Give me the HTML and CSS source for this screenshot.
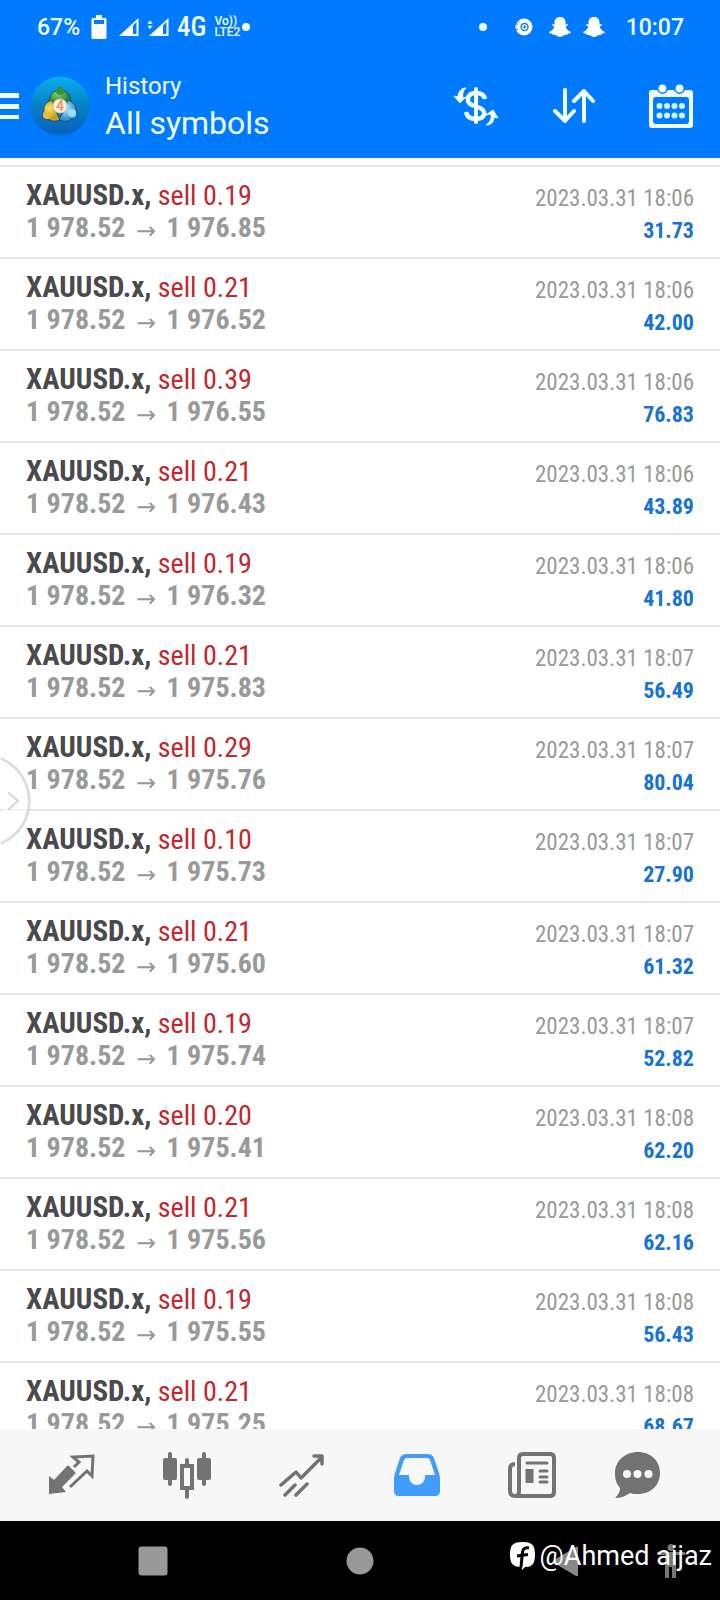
FILE: index.html
```html
<!DOCTYPE html>
<html lang="en">
<head>
<meta charset="utf-8">
<meta name="viewport" content="width=device-width, initial-scale=1">
<title>History</title>
<link rel="stylesheet" href="styles.css">
</head>
<body>
<div class="app">
  <header class="header">
    <div class="status">
      <div class="status-left">
        <span class="battery-text">67%</span>
        <svg width="16" height="24" viewBox="0 0 16 24" fill="#fff"><path d="M5 0h6v3h3q1.500 0 1.500 1.500v18q0 1.500-1.500 1.500H2q-1.500 0-1.500-1.500v-18Q.5 3 2 3h3z"/><path fill="#007aff" d="M3 5h10v4H3z"/></svg>
        <svg class="signal" width="20" height="18" viewBox="0 0 20 18"><path fill="#fff" d="M19.500 0v18H0z"/><path fill="#007aff" d="M14 7.500l3.500-3.500v12H14z"/></svg>
        <svg width="22" height="18" viewBox="0 0 22 18"><path fill="#fff" d="M21.500 0v18H2z"/><path fill="#007aff" d="M16 7.500l3.500-3.500v12H16z"/><path fill="#fff" stroke="#007aff" stroke-width=".5" d="M0 6l3-4 3 4zM0 7.500h6l-3 4z"/></svg>
        <span class="network">4G</span>
        <span class="volte"><span>Vo))</span><span>LTE2</span></span>
        <i class="dot"></i>
      </div>
      <div class="status-right">
        <i class="dot"></i>
        <svg class="play" width="18" height="18" viewBox="0 0 18 18"><circle cx="9" cy="9" r="8.500" fill="#fff"/><circle cx="9.500" cy="9" r="3.500" fill="none" stroke="#007aff" stroke-width="1.300"/><path fill="#007aff" d="M8.500 7l3 2-3 2z"/><path d="M1 5.500l2 1M1 12l2-1M3 3l1.500 1.500" stroke="#007aff"/></svg>
        <svg width="22" height="20" viewBox="0 0 22 20"><path fill="#fff" d="M11 0c4 0 5.500 2.500 5.500 5.500v2l2-.5c1 .8 0 1.800-1.800 2.600.6 2.600 2.300 4.200 5.300 5.400-.2 1.200-1.500 1.500-3.300 1.700-.4 1.200-.8 1.500-3 1.300-1.600.5-2.500 2-4.700 2s-3.100-1.500-4.700-2c-2.200.2-2.600-.1-3-1.300C1.500 16.500.2 16.200 0 15c3-1.200 4.700-2.800 5.300-5.400C3.500 8.800 2.500 7.800 3.500 7l2 .5v-2C5.500 2.500 7 0 11 0z"/></svg>
        <svg width="22" height="20" viewBox="0 0 22 20"><path fill="#fff" d="M11 0c4 0 5.500 2.500 5.500 5.500v2l2-.5c1 .8 0 1.800-1.800 2.600.6 2.600 2.300 4.200 5.300 5.400-.2 1.200-1.500 1.500-3.300 1.700-.4 1.200-.8 1.500-3 1.300-1.600.5-2.500 2-4.700 2s-3.100-1.500-4.700-2c-2.200.2-2.600-.1-3-1.300C1.500 16.500.2 16.200 0 15c3-1.200 4.700-2.800 5.300-5.400C3.500 8.800 2.500 7.800 3.500 7l2 .5v-2C5.500 2.500 7 0 11 0z"/></svg>
        <time class="clock">10:07</time>
      </div>
    </div>
    <div class="bar">
      <button class="icon-btn" aria-label="Menu"><svg width="20" height="28" viewBox="0 0 20 28" fill="#f0ffff"><path d="M0 1h19v5H0zM0 12h19v5H0zM0 23h19v4H0z"/></svg></button>
      <svg class="logo" width="60" height="60" viewBox="0 0 60 60">
        <defs>
          <linearGradient id="disc" x1="0" y1="0" x2="0" y2="1"><stop offset="0" stop-color="#08aff0"/><stop offset=".5" stop-color="#087fc4"/><stop offset="1" stop-color="#0560bd"/></linearGradient>
          <radialGradient id="green" cx=".4" cy=".3"><stop offset="0" stop-color="#8fd070"/><stop offset="1" stop-color="#27883d"/></radialGradient>
          <radialGradient id="gold" cx=".4" cy=".4"><stop offset="0" stop-color="#ffe665"/><stop offset="1" stop-color="#c79c20"/></radialGradient>
          <radialGradient id="blue" cx=".4" cy=".4"><stop offset="0" stop-color="#b5eaff"/><stop offset="1" stop-color="#3c91cf"/></radialGradient>
        </defs>
        <circle cx="30" cy="30" r="29.500" fill="url(#disc)"/>
        <g stroke="#123f55" stroke-opacity=".7">
          <path fill="url(#green)" d="M19 27c0-7 3-11 7-12 1-4 7-4 8 0 4 1 7 5 7 12l-11 4z"/>
          <path fill="url(#gold)" d="M22 24l4 11 4 9c-5 2-9 1-12-1-5 1-7-4-4-8-1-6 3-9 8-11z"/>
          <path fill="url(#blue)" d="M38 24c5 2 9 6 8 12 3 4 0 8-5 7-3 3-8 3-12 0l5-8z"/>
        </g>
        <circle cx="30" cy="15" r="4" fill="#2f9440"/><circle cx="17" cy="39" r="4" fill="#e8be37"/><circle cx="42" cy="37" r="4" fill="#9be0fb"/>
        <circle cx="30" cy="30" r="7" fill="#f7f1ea" stroke="#c9d0a8"/>
        <text class="logo-digit" x="30" y="35" text-anchor="middle">4</text>
      </svg>
      <div class="titles">
        <span class="subtitle">History</span>
        <h1 class="title">All symbols</h1>
      </div>
      <div class="actions">
        <button class="icon-btn" aria-label="Symbols"><svg width="46" height="44" viewBox="0 0 46 44" fill="none" stroke="#f0ffff"><path stroke-width="4" stroke-linecap="round" d="M23 5v33"/><path stroke-width="4.500" d="M32 15c-1-5-5-6-9-6-10 0-10 10-4 12l8 3c7 3 5 11-4 11-5 0-9-2-10-7"/><path fill="#f0ffff" d="M13 4c-3 3-4 6-3 10l3-1-6 6-6-7 4 1C5 8 8 4 13 4zM33 41c4-3 6-6 5-11l-5 1 7-5 5 8-4-1c0 5-3 8-8 8z"/></svg></button>
        <button class="icon-btn" aria-label="Sort"><svg width="42" height="36" viewBox="0 0 42 36" fill="none" stroke="#f0ffff" stroke-width="4" stroke-linecap="round" stroke-linejoin="round"><path d="M12 2v31M2 23l10 10 9-10M31 33V3M21 13L31 3l9 10"/></svg></button>
        <button class="icon-btn" aria-label="Calendar"><svg width="44" height="46" viewBox="0 0 44 46"><rect y="7" width="44" height="38" rx="3" fill="#f0ffff"/><rect x="4" y="14" width="36" height="27" rx="3" fill="#007aff"/><g fill="#f0ffff" stroke="#007aff" stroke-width="1.500"><circle cx="13.500" cy="5.500" r="4.700"/><circle cx="30.500" cy="5.500" r="4.700"/></g><g fill="#d3f5ff"><circle cx="10.500" cy="23" r="3"/><circle cx="18" cy="23" r="3"/><circle cx="25.500" cy="23" r="3"/><circle cx="33" cy="23" r="3"/><circle cx="10.500" cy="32.500" r="3"/><circle cx="18" cy="32.500" r="3"/><circle cx="25.500" cy="32.500" r="3"/><circle cx="33" cy="32.500" r="3"/></g></svg></button>
      </div>
    </div>
  </header>

  <main class="main">
    <ul class="deals">
      <li class="deal"><div><p class="symbol"><b>XAUUSD.x,</b> sell 0.19</p><p class="price">1 978.52 <span class="arrow">→</span> 1 976.85</p></div><div class="result"><time class="date">2023.03.31 18:06</time><span class="profit">31.73</span></div></li>
      <li class="deal"><div><p class="symbol"><b>XAUUSD.x,</b> sell 0.21</p><p class="price">1 978.52 <span class="arrow">→</span> 1 976.52</p></div><div class="result"><time class="date">2023.03.31 18:06</time><span class="profit">42.00</span></div></li>
      <li class="deal"><div><p class="symbol"><b>XAUUSD.x,</b> sell 0.39</p><p class="price">1 978.52 <span class="arrow">→</span> 1 976.55</p></div><div class="result"><time class="date">2023.03.31 18:06</time><span class="profit">76.83</span></div></li>
      <li class="deal"><div><p class="symbol"><b>XAUUSD.x,</b> sell 0.21</p><p class="price">1 978.52 <span class="arrow">→</span> 1 976.43</p></div><div class="result"><time class="date">2023.03.31 18:06</time><span class="profit">43.89</span></div></li>
      <li class="deal"><div><p class="symbol"><b>XAUUSD.x,</b> sell 0.19</p><p class="price">1 978.52 <span class="arrow">→</span> 1 976.32</p></div><div class="result"><time class="date">2023.03.31 18:06</time><span class="profit">41.80</span></div></li>
      <li class="deal"><div><p class="symbol"><b>XAUUSD.x,</b> sell 0.21</p><p class="price">1 978.52 <span class="arrow">→</span> 1 975.83</p></div><div class="result"><time class="date">2023.03.31 18:07</time><span class="profit">56.49</span></div></li>
      <li class="deal"><div><p class="symbol"><b>XAUUSD.x,</b> sell 0.29</p><p class="price">1 978.52 <span class="arrow">→</span> 1 975.76</p></div><div class="result"><time class="date">2023.03.31 18:07</time><span class="profit">80.04</span></div></li>
      <li class="deal"><div><p class="symbol"><b>XAUUSD.x,</b> sell 0.10</p><p class="price">1 978.52 <span class="arrow">→</span> 1 975.73</p></div><div class="result"><time class="date">2023.03.31 18:07</time><span class="profit">27.90</span></div></li>
      <li class="deal"><div><p class="symbol"><b>XAUUSD.x,</b> sell 0.21</p><p class="price">1 978.52 <span class="arrow">→</span> 1 975.60</p></div><div class="result"><time class="date">2023.03.31 18:07</time><span class="profit">61.32</span></div></li>
      <li class="deal"><div><p class="symbol"><b>XAUUSD.x,</b> sell 0.19</p><p class="price">1 978.52 <span class="arrow">→</span> 1 975.74</p></div><div class="result"><time class="date">2023.03.31 18:07</time><span class="profit">52.82</span></div></li>
      <li class="deal"><div><p class="symbol"><b>XAUUSD.x,</b> sell 0.20</p><p class="price">1 978.52 <span class="arrow">→</span> 1 975.41</p></div><div class="result"><time class="date">2023.03.31 18:08</time><span class="profit">62.20</span></div></li>
      <li class="deal"><div><p class="symbol"><b>XAUUSD.x,</b> sell 0.21</p><p class="price">1 978.52 <span class="arrow">→</span> 1 975.56</p></div><div class="result"><time class="date">2023.03.31 18:08</time><span class="profit">62.16</span></div></li>
      <li class="deal"><div><p class="symbol"><b>XAUUSD.x,</b> sell 0.19</p><p class="price">1 978.52 <span class="arrow">→</span> 1 975.55</p></div><div class="result"><time class="date">2023.03.31 18:08</time><span class="profit">56.43</span></div></li>
      <li class="deal"><div><p class="symbol"><b>XAUUSD.x,</b> sell 0.21</p><p class="price">1 978.52 <span class="arrow">→</span> 1 975.25</p></div><div class="result"><time class="date">2023.03.31 18:08</time><span class="profit">68.67</span></div></li>
    </ul>
    <button class="drawer" aria-label="Open side panel"><svg width="32" height="90" viewBox="0 0 32 90" fill="none" stroke-linecap="round"><path d="M2 3a46 46 0 0 1 0 84" fill="#fff" fill-opacity=".5" stroke="#ddd" stroke-width="3"/><path d="M9 37l9 8-9 8" stroke="#d4d4d4" stroke-width="2"/></svg></button>
  </main>

  <nav class="tabs">
    <button class="icon-btn" aria-label="Quotes"><svg width="48" height="42" viewBox="0 0 48 42"><path fill="#737373" d="M1 22l5 4L19 12q1-1 2 0l6 6q1 1 0 2L14 33l4 5L1 40z"/><path fill="none" stroke="#737373" stroke-width="3" d="M26 13l5-5-6-5 20-1-1 20-5-5-17 16"/></svg></button>
    <button class="icon-btn" aria-label="Charts"><svg width="50" height="48" viewBox="0 0 50 48" fill="#737373"><rect x="1" y="7" width="14" height="22" rx="2"/><rect x="35" y="7" width="14" height="22" rx="2"/><path fill="none" stroke="#737373" stroke-width="4" stroke-linecap="round" d="M8 3v30M42 3v30M25 9v5M25 38v8"/><rect x="20" y="15" width="10" height="22" fill="none" stroke="#737373" stroke-width="4"/></svg></button>
    <button class="icon-btn" aria-label="Trade"><svg width="46" height="44" viewBox="0 0 46 44" fill="none" stroke="#737373" stroke-width="3.500" stroke-linecap="round" stroke-linejoin="round"><path d="M2 32l15-13 5 6L43 4M35 3h8v8M6 42l10-10M17 42l11-11"/></svg></button>
    <button class="icon-btn" aria-label="History"><svg width="46" height="42" viewBox="0 0 46 42"><path fill="#429cfa" d="M12 0h22q4 0 6 4l5 15q1 3 1 6v12q0 5-5 5H5q-5 0-5-5V25q0-3 1-6L6 4q2-4 6-4z"/><path fill="#f8f8f8" d="M12 4h22l2 2 5 15H31v2a8 8 0 0 1-16 0v-2H5l5-15z"/></svg></button>
    <button class="icon-btn" aria-label="News"><svg width="48" height="46" viewBox="0 0 48 46" fill="none" stroke="#737373" stroke-width="4"><path d="M7 12q-5 0-5 5v22q0 5 5 5h35q4 0 4-4V6q0-4-4-4H15q-4 0-4 4v33q0 5-3 5"/><path stroke-linecap="round" stroke-width="3" d="M19 11h20M32 19h7M32 25h7M32 30h7"/><path d="M19.500 19h4v10h-4z"/></svg></button>
    <button class="icon-btn" aria-label="Messages"><svg width="46" height="46" viewBox="0 0 46 46"><path fill="#737373" d="M23 0c13 0 22 9 22 21s-9 21-22 21c-3 0-6 0-8-1-4 3-9 5-15 5 4-4 5-7 5-10C1 31 0 27 0 21 0 9 10 0 23 0z"/><g fill="#f8f8f8"><circle cx="12" cy="22" r="4"/><circle cx="22.500" cy="22" r="4"/><circle cx="33.500" cy="22" r="4"/></g></svg></button>
  </nav>

  <footer class="system">
    <button class="icon-btn" aria-label="Recent apps"><svg width="30" height="30" viewBox="0 0 30 30"><rect x=".5" y=".5" width="29" height="29" rx="3" fill="#999"/></svg></button>
    <button class="icon-btn" aria-label="Home"><svg width="28" height="28" viewBox="0 0 28 28"><circle cx="14" cy="14" r="13.500" fill="#999"/></svg></button>
    <button class="icon-btn" aria-label="Back"><svg width="26" height="30" viewBox="0 0 26 30"><path fill="#888" d="M25 1v28q0 2-2 1L1 17q-2-2 0-3L23 1q2-1 2 0z"/></svg></button>
    <button class="icon-btn" aria-label="Accessibility"><svg width="30" height="34" viewBox="0 0 30 34" fill="#777"><circle cx="15" cy="3.500" r="3.500"/><path d="M1 8h28v3h-9v23h-4V23h-3v11H9V11H1z"/></svg></button>
    <div class="watermark">
      <svg width="26" height="28" viewBox="0 0 26 28"><path fill="#fff" d="M12.500 0C22 0 25 3 25 12.500S22 25 15 25l-3 3v-3C3 25 0 22 0 12.500S3 0 12.500 0z"/><path fill="none" stroke="#000" stroke-width="3" d="M19 6c-4-1-6 1-6.500 4L11 25M7 14l11-1.500"/></svg>
      <span>@Ahmed aijaz</span>
    </div>
  </footer>
</div>
</body>
</html>
```
FILE: styles.css
```css
* { box-sizing: border-box; }

body {
  margin: 0;
  background: #fff;
  font-family: Roboto, "Open Sans", sans-serif;
}

p, h1, ul { margin: 0; padding: 0; }

svg { display: block; flex: none; }

.app {
  display: flex;
  flex-direction: column;
  height: 100vh;
}

.icon-btn {
  display: flex;
  align-items: center;
  justify-content: center;
  padding: 0;
  border: 0;
  background: none;
}

/* Header */
.header {
  flex: none;
  background: #007aff;
  color: #f0ffff;
}

.status {
  display: flex;
  justify-content: space-between;
  align-items: center;
  height: 54px;
  padding: 0 36px 0 37px;
}

.status-left,
.status-right {
  display: flex;
  align-items: center;
}

.status-left { gap: 8px; }
.status-right { gap: 12px; }

.battery-text {
  margin-right: 3px;
  font-size: 23px;
  font-weight: 500;
}

.signal { margin-left: 4px; }

.network {
  font-size: 27px;
  font-weight: 500;
  font-family: "Roboto Condensed", "Liberation Sans Narrow", sans-serif;
}

.volte {
  display: flex;
  flex-direction: column;
  font-size: 12px;
  font-weight: 500;
  line-height: 11px;
}

.dot {
  width: 8px;
  height: 8px;
  border-radius: 50%;
  background: #f0ffff;
}

.status-left .dot { margin-left: -6px; }
.play { margin: 0 4px 0 16px; }

.clock {
  margin-left: 9px;
  font-size: 23px;
  font-weight: 500;
}

.bar {
  display: flex;
  align-items: center;
  height: 104px;
  padding-right: 27px;
}

.logo { margin-left: 10px; }

.logo-digit {
  fill: #f28c4b;
  font-size: 14px;
  font-weight: 500;
}

.titles {
  flex: 1;
  padding-left: 15px;
}

.subtitle {
  display: block;
  font-size: 24px;
  line-height: 34px;
}

.title {
  font-size: 32px;
  font-weight: 400;
  line-height: 40px;
}

.actions {
  display: flex;
  align-items: center;
  gap: 54px;
}

/* Deals */
.main {
  position: relative;
  flex: 1;
  min-height: 0;
  overflow: hidden;
  padding-top: 7px;
}

.deals { list-style: none; }

.deal {
  display: flex;
  justify-content: space-between;
  height: 92px;
  padding: 12px 26px 0;
  border-top: 2px solid #e4e4e4;
  font-family: "Roboto Condensed", "Liberation Sans Narrow", sans-serif;
  font-size: 28px;
  line-height: 32px;
  white-space: nowrap;
}

.symbol { color: #c1272d; }

.symbol b {
  color: #4a4a4d;
  font-size: 29px;
}

.price {
  color: #999;
  font-weight: 700;
}

.arrow {
  padding: 0 4px;
  font-family: "DejaVu Sans", sans-serif;
  font-size: 24px;
  font-weight: 400;
  line-height: 24px;
  vertical-align: -2px;
}

.result {
  display: flex;
  flex-direction: column;
  align-items: flex-end;
  padding-top: 4px;
  font-size: 23px;
}

.date { color: #999; }

.profit {
  color: #1673d4;
  font-size: 22px;
  font-weight: 700;
}

.drawer {
  position: absolute;
  top: 598px;
  left: 0;
  padding: 0;
  border: 0;
  background: none;
}

/* Bottom tabs */
.tabs {
  display: grid;
  flex: none;
  grid-template-columns: 115fr 115fr 115fr 115fr 115fr 97fr;
  height: 92px;
  padding: 0 34px 0 14px;
  background: #f7f7f7;
}

/* System bar */
.system {
  position: relative;
  display: grid;
  flex: none;
  grid-template-columns: 122fr 292fr 120fr 90fr;
  height: 79px;
  padding: 0 4px 0 92px;
  background: #000;
}

.watermark {
  position: absolute;
  top: 18px;
  right: 8px;
  display: flex;
  align-items: center;
  gap: 4px;
  color: #fff;
  font-size: 27px;
  line-height: 34px;
}
```
